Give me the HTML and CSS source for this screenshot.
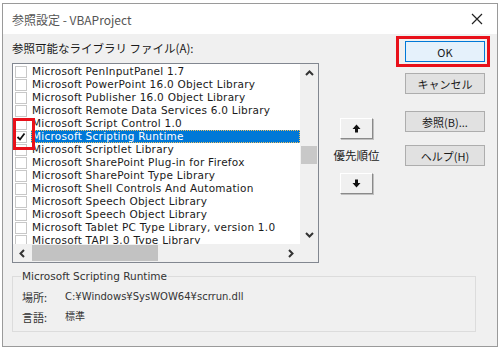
FILE: index.html
```html
<!DOCTYPE html>
<html lang="ja">
  <head>
    <meta charset="UTF-8" />
    <title>参照設定 - VBAProject</title>
    <link rel="stylesheet" href="styles.css">
  </head>
  <body>
    <section class="dialog">
      <header class="titlebar">
        <span class="title">参照設定 - VBAProject</span>
        <svg class="close" width="12" height="12" viewBox="0 0 12 12">
          <path d="M1 1 L11 11 M11 1 L1 11" stroke="#222" stroke-width="1.2" fill="none" />
        </svg>
      </header>

      <div class="body">
        <div class="top">
          <div class="left">
            <div class="label">参照可能なライブラリ ファイル(A):</div>
            <div class="listbox">
              <div class="list-main">
                <ul class="items">
                  <li><span class="box"></span><span class="name">Microsoft PenInputPanel 1.7</span></li>
                  <li><span class="box"></span><span class="name">Microsoft PowerPoint 16.0 Object Library</span></li>
                  <li><span class="box"></span><span class="name">Microsoft Publisher 16.0 Object Library</span></li>
                  <li><span class="box"></span><span class="name">Microsoft Remote Data Services 6.0 Library</span></li>
                  <li><span class="box"></span><span class="name">Microsoft Script Control 1.0</span></li>
                  <li class="selected">
                    <span class="box checked">
                      <svg width="10" height="10" viewBox="0 0 10 10">
                        <path d="M1.5 5 L4 7.5 L8.5 1.5" stroke="#111" stroke-width="1.8" fill="none" />
                      </svg>
                    </span>
                    <span class="name">Microsoft Scripting Runtime</span>
                  </li>
                  <li><span class="box"></span><span class="name">Microsoft Scriptlet Library</span></li>
                  <li><span class="box"></span><span class="name">Microsoft SharePoint Plug-in for Firefox</span></li>
                  <li><span class="box"></span><span class="name">Microsoft SharePoint Type Library</span></li>
                  <li><span class="box"></span><span class="name">Microsoft Shell Controls And Automation</span></li>
                  <li><span class="box"></span><span class="name">Microsoft Speech Object Library</span></li>
                  <li><span class="box"></span><span class="name">Microsoft Speech Object Library</span></li>
                  <li><span class="box"></span><span class="name">Microsoft Tablet PC Type Library, version 1.0</span></li>
                  <li><span class="box"></span><span class="name">Microsoft TAPI 3.0 Type Library</span></li>
                </ul>
                <div class="vscroll">
                  <span class="arrow">
                    <svg width="9" height="6" viewBox="0 0 9 6"><path d="M1 5 L4.5 1.5 L8 5" stroke="#333" stroke-width="2" fill="none" /></svg>
                  </span>
                  <div class="vthumb"></div>
                  <span class="arrow arrow-down">
                    <svg width="9" height="6" viewBox="0 0 9 6"><path d="M1 1 L4.5 4.5 L8 1" stroke="#333" stroke-width="2" fill="none" /></svg>
                  </span>
                </div>
              </div>
              <div class="hscroll">
                <span class="arrow">
                  <svg width="6" height="9" viewBox="0 0 6 9"><path d="M5 1 L1.5 4.5 L5 8" stroke="#333" stroke-width="2" fill="none" /></svg>
                </span>
                <div class="hthumb"></div>
                <span class="arrow arrow-right">
                  <svg width="6" height="9" viewBox="0 0 6 9"><path d="M1 1 L4.5 4.5 L1 8" stroke="#333" stroke-width="2" fill="none" /></svg>
                </span>
                <span class="corner"></span>
              </div>
            </div>
          </div>

          <div class="middle">
            <button class="move move-up">
              <svg width="9" height="9" viewBox="0 0 9 9"><path d="M4.5 0.5 L8.5 5 L6 5 L6 8.5 L3 8.5 L3 5 L0.5 5 Z" fill="#111" /></svg>
            </button>
            <div class="priority">優先順位</div>
            <button class="move move-down">
              <svg width="9" height="9" viewBox="0 0 9 9"><path d="M4.5 8.5 L8.5 4 L6 4 L6 0.5 L3 0.5 L3 4 L0.5 4 Z" fill="#111" /></svg>
            </button>
          </div>

          <div class="right">
            <button class="btn btn-ok">OK</button>
            <button class="btn btn-cancel">キャンセル</button>
            <button class="btn btn-browse">参照(B)...</button>
            <button class="btn btn-help">ヘルプ(H)</button>
          </div>
        </div>

        <fieldset class="group">
          <legend>Microsoft Scripting Runtime</legend>
          <div class="info"><span class="key">場所:</span><span>C:¥Windows¥SysWOW64¥scrrun.dll</span></div>
          <div class="info"><span class="key">言語:</span><span>標準</span></div>
        </fieldset>
      </div>

      <span class="mark mark-ok"></span>
      <span class="mark mark-check"></span>
    </section>
  </body>
</html>
```

FILE: styles.css
```css
html,
body {
  margin: 0;
  padding: 0;
  background: #fff;
}

body {
  font-family: "Noto Sans CJK JP", "DejaVu Sans", sans-serif;
  color: #1a1a1a;
}

.dialog {
  position: relative;
  width: 494px;
  height: 342px;
  margin: 3px 0 0 2px;
  border: 1px solid #9a9a9a;
  background: #f0f0f0;
  display: flex;
  flex-direction: column;
}

.titlebar {
  height: 30px;
  background: #fff;
  display: flex;
  align-items: center;
  justify-content: space-between;
  padding: 0 14px 0 9px;
}

.title {
  font-size: 12px;
  color: #555;
}

.body {
  padding: 7px 0 0 9px;
}

.top {
  display: flex;
}

.left {
  width: 307px;
}

.label {
  font-size: 11.5px;
  line-height: 14px;
  height: 14px;
  white-space: nowrap;
}

/* list box */

.listbox {
  margin-top: 8px;
  width: 305px;
  height: 198px;
  border: 1px solid #828790;
  background: #fff;
  display: flex;
  flex-direction: column;
}

.list-main {
  height: 180px;
  flex: none;
  display: flex;
}

.items {
  flex: 1;
  list-style: none;
  margin: 0;
  padding: 1px 0 0 0;
  overflow: hidden;
  font-family: "DejaVu Sans", sans-serif;
  font-size: 10.5px;
  letter-spacing: 0.25px;
}

.items li {
  display: flex;
  align-items: center;
  height: 13px;
  padding-left: 2px;
  white-space: nowrap;
}

.box {
  flex: none;
  width: 10px;
  height: 10px;
  border: 1px solid #c8c8c8;
  background: #fff;
  margin-right: 4px;
  display: flex;
  align-items: center;
  justify-content: center;
}

.name {
  line-height: 13px;
  padding-left: 1px;
}

.selected .name {
  flex: 1;
  background: #0078d7;
  color: #fff;
  outline: 1px dotted #f0c060;
  outline-offset: -1px;
}

.arrow {
  flex: none;
  width: 18px;
  height: 18px;
  display: flex;
  align-items: center;
  justify-content: center;
}

.vscroll {
  flex: none;
  width: 18px;
  background: #f0f0f0;
  display: flex;
  flex-direction: column;
}

.vthumb {
  flex: none;
  margin: 64px 1px 0;
  height: 18px;
  background: #c8c8c8;
}

.arrow-down {
  margin-top: auto;
}

.hscroll {
  flex: none;
  height: 18px;
  background: #f0f0f0;
  display: flex;
  align-items: center;
}

.hthumb {
  flex: none;
  width: 126px;
  height: 16px;
  margin-left: 1px;
  background: #c2c2c2;
}

.arrow-right {
  margin-left: auto;
}

.corner {
  flex: none;
  width: 18px;
  height: 18px;
}

/* priority */

.middle {
  width: 33px;
  margin-left: 21px;
  padding-top: 77px;
  display: flex;
  flex-direction: column;
  align-items: center;
}

.move {
  width: 33px;
  height: 21px;
  padding: 0;
  background: #f0f0f0;
  border: 1px solid;
  border-color: #fff #8a8a8a #8a8a8a #fff;
  box-shadow: 1px 1px 0 #c0c0c0;
  display: flex;
  align-items: center;
  justify-content: center;
}

.priority {
  font-size: 11.5px;
  line-height: 14px;
  margin: 9px 0 11px;
  white-space: nowrap;
}

/* buttons */

.right {
  margin-left: 32px;
  display: flex;
  flex-direction: column;
}

.btn {
  width: 80px;
  height: 21px;
  padding: 0;
  font-family: "Noto Sans CJK JP", "DejaVu Sans", sans-serif;
  font-size: 11px;
  color: #1a1a1a;
  background: #e1e1e1;
  border: 1px solid #adadad;
}

.btn-ok {
  background: #e5f1fb;
  border-color: #0078d7;
}

.btn-cancel {
  margin-top: 11px;
}

.btn-browse {
  margin-top: 17px;
}

.btn-help {
  margin-top: 13px;
}

/* group box */

.group {
  margin: 7px 0 0 0;
  width: 453px;
  height: 55px;
  padding: 5px 0 0 9px;
  border: 1px solid #dcdcdc;
  font-size: 11px;
}

.group legend {
  padding: 0 1px;
  margin-left: -1px;
  font-family: "DejaVu Sans", sans-serif;
  font-size: 10.5px;
  color: #333;
}

.info {
  display: flex;
  line-height: 20px;
  font-family: "DejaVu Sans", "Noto Sans CJK JP", sans-serif;
  font-size: 10px;
  color: #333;
}

.info .key {
  width: 43px;
  font-family: "Noto Sans CJK JP", sans-serif;
  font-size: 11px;
}

/* red annotation boxes */

.mark {
  position: absolute;
  border: 3px solid #e8101a;
}

.mark-ok {
  left: 393px;
  top: 32px;
  width: 88px;
  height: 25px;
}

.mark-check {
  left: 10px;
  top: 114px;
  width: 16px;
  height: 26px;
}
```
